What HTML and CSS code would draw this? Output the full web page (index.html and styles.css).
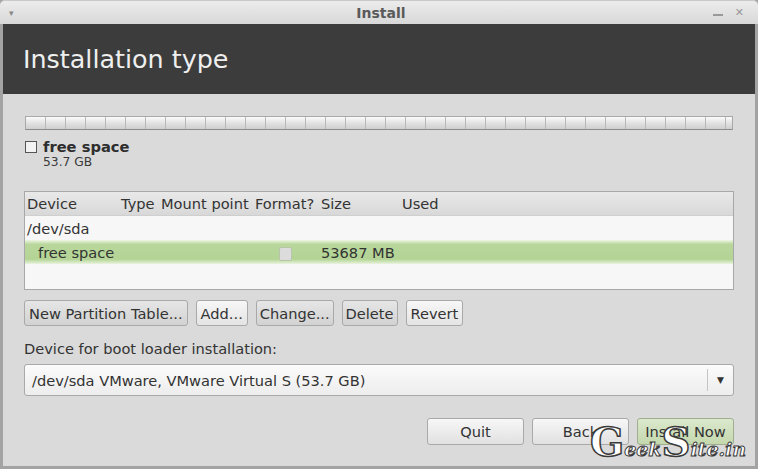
FILE: index.html
```html
<!DOCTYPE html>
<html lang="en">
<head>
    <meta charset="UTF-8">
    <title>Install</title>
    <link rel="stylesheet" href="styles.css">
</head>
<body>
    <div class="window">
        <div class="titlebar">
            <span class="menu-arrow">&#9662;</span>
            <span class="title">Install</span>
            <span class="controls"><span class="min"></span><span class="close">&#10005;</span></span>
        </div>
        <div class="header">Installation type</div>
        <div class="content">
            <div class="disk-bar"></div>
            <div class="legend">
                <span class="legend-box"></span>
                <div>
                    <div class="legend-name">free space</div>
                    <div class="legend-size">53.7 GB</div>
                </div>
            </div>

            <div class="table">
                <div class="row head">
                    <span class="c-dev">Device</span>
                    <span class="c-type">Type</span>
                    <span class="c-mount">Mount point</span>
                    <span class="c-fmt">Format?</span>
                    <span class="c-size">Size</span>
                    <span class="c-used">Used</span>
                </div>
                <div class="row">
                    <span class="c-dev">/dev/sda</span>
                </div>
                <div class="row selected">
                    <span class="c-dev indent">free space</span>
                    <span class="c-type"></span>
                    <span class="c-mount"></span>
                    <span class="c-fmt"><span class="fmt-box"></span></span>
                    <span class="c-size">53687 MB</span>
                </div>
                <div class="row"></div>
            </div>

            <div class="tools">
                <button class="btn">New Partition Table...</button>
                <button class="btn light">Add...</button>
                <button class="btn tight">Change...</button>
                <button class="btn tight">Delete</button>
                <button class="btn light">Revert</button>
            </div>

            <div class="boot-label">Device for boot loader installation:</div>
            <div class="combo">
                <span class="combo-text">/dev/sda VMware, VMware Virtual S (53.7 GB)</span>
                <span class="combo-arrow">&#9660;</span>
            </div>

            <div class="actions">
                <button class="btn big">Quit</button>
                <button class="btn big">Back</button>
                <button class="btn big primary">Install Now</button>
            </div>
        </div>
        <div class="watermark"><span class="wm-cap">G</span><span class="wm-low">eek</span><span class="wm-cap">S</span><span class="wm-low">ite.in</span></div>
    </div>
</body>
</html>
```

FILE: styles.css
```css
* {
    box-sizing: border-box;
}
body {
    margin: 0;
    width: 758px;
    height: 469px;
    overflow: hidden;
    font-family: 'DejaVu Sans', 'Liberation Sans', sans-serif;
    font-size: 14.6px;
    color: #333;
    background: #dadada;
}
.window {
    position: relative;
    height: 469px;
    border-left: 3px solid #a3a3a3;
    border-right: 3px solid #a3a3a3;
    border-bottom: 3px solid #a3a3a3;
    background: #dadada;
}
.titlebar {
    height: 24px;
    margin: 0 -3px;
    display: flex;
    align-items: center;
    padding: 0 14px 0 9px;
    background: linear-gradient(#ececec, #d8d8d8);
    border-radius: 5px 5px 0 0;
    border-top: 1px solid #c8c8c8;
}
.menu-arrow {
    font-size: 9px;
    color: #888;
    width: 20px;
}
.title {
    flex: 1;
    text-align: center;
    font-weight: bold;
    font-size: 14px;
    color: #5a5a5a;
    padding-left: 20px;
}
.controls {
    display: flex;
    align-items: center;
    gap: 12px;
    color: #999;
}
.min {
    width: 10px;
    height: 2px;
    background: #999;
    margin-top: 4px;
}
.close {
    font-size: 11px;
    font-weight: bold;
}
.header {
    height: 70px;
    background: #3c3c3c;
    color: #efefef;
    font-size: 25.4px;
    padding: 20px 0 0 20px;
}
.content {
    padding: 22px 21px 0 21px;
}
.disk-bar {
    height: 14px;
    border: 1px solid #a8a8a8;
    border-bottom-color: #8c8c8c;
    background:
        repeating-linear-gradient(to right, transparent 0, transparent 19px, #b8b8b8 19px, #b8b8b8 20px),
        linear-gradient(#fbfbfb, #dedede 60%, #cfcfcf);
    margin: 0 1px;
}
.legend {
    display: flex;
    align-items: flex-start;
    margin-top: 8px;
    gap: 6px;
}
.legend-box {
    width: 12px;
    height: 12px;
    border: 1px solid #555;
    background: #f2f2f2;
    margin: 3px 0 0 1px;
}
.legend-name {
    font-weight: bold;
    font-size: 14.7px;
    color: #2e2e2e;
    line-height: 17px;
}
.legend-size {
    font-size: 12.3px;
    color: #3a3a3a;
    margin-top: 0;
}
.table {
    margin-top: 22px;
    border: 1px solid #a8a8a8;
    background: #f7f7f7;
}
.row {
    display: flex;
    height: 24px;
    align-items: center;
    white-space: nowrap;
    color: #333;
}
.row.head {
    background: linear-gradient(#e9e9e9, #d8d8d8);
    border-bottom: 1px solid #cfcfcf;
}
.row.selected {
    background: linear-gradient(#eef5e4, #b9d79c 18%, #b3d495 80%, #eaf3df);
}
.row:last-child {
    height: 25px;
}
.c-dev {
    width: 96px;
    padding-left: 2px;
}
.c-dev.indent {
    padding-left: 13px;
}
.c-type {
    width: 40px;
}
.c-mount {
    width: 94px;
}
.c-fmt {
    width: 66px;
}
.fmt-box {
    display: inline-block;
    width: 13px;
    height: 14px;
    margin-left: 24px;
    border: 1px solid #b8c5aa;
    background: #dcdcdc;
    border-radius: 2px;
    vertical-align: middle;
}
.c-size {
    width: 81px;
}
.tools {
    display: flex;
    gap: 8px;
    margin-top: 10px;
}
.btn {
    font-family: inherit;
    font-size: 14.6px;
    color: #333;
    height: 26px;
    padding: 0 4px;
    border: 1px solid #a9a9a9;
    border-radius: 3px;
    background: linear-gradient(#e6e6e6, #d2d2d2);
}
.btn.tight {
    padding: 0 3px;
}
.btn.light {
    background: linear-gradient(#f7f7f7, #e4e4e4);
}
.boot-label {
    margin-top: 14px;
    color: #333;
}
.combo {
    margin-top: 7px;
    height: 32px;
    display: flex;
    align-items: center;
    border: 1px solid #a9a9a9;
    border-radius: 3px;
    background: linear-gradient(#fbfbfb, #ededed);
}
.combo-text {
    flex: 1;
    padding-left: 7px;
}
.combo-arrow {
    width: 26px;
    height: 22px;
    border-left: 1px solid #c4c4c4;
    font-size: 9px;
    color: #333;
    display: flex;
    align-items: center;
    justify-content: center;
}
.actions {
    display: flex;
    justify-content: flex-end;
    gap: 8px;
    margin-top: 22px;
}
.btn.big {
    width: 97px;
    height: 27px;
    background: linear-gradient(#f7f7f7, #e1e1e1);
}
.btn.primary {
    background: linear-gradient(#dbe8cd, #c4d8ad);
    border-color: #9fae8f;
}
.watermark {
    position: absolute;
    left: 587px;
    top: 422px;
    font-family: 'DejaVu Serif', 'Liberation Serif', serif;
    color: #fff;
    -webkit-text-stroke: 1.5px #3a3a3a;
    white-space: nowrap;
    line-height: 1;
}
.wm-cap {
    font-size: 40px;
    font-weight: bold;
}
.wm-low {
    font-size: 19px;
    font-style: italic;
    font-weight: bold;
    -webkit-text-stroke: 1px #3a3a3a;
}
```
